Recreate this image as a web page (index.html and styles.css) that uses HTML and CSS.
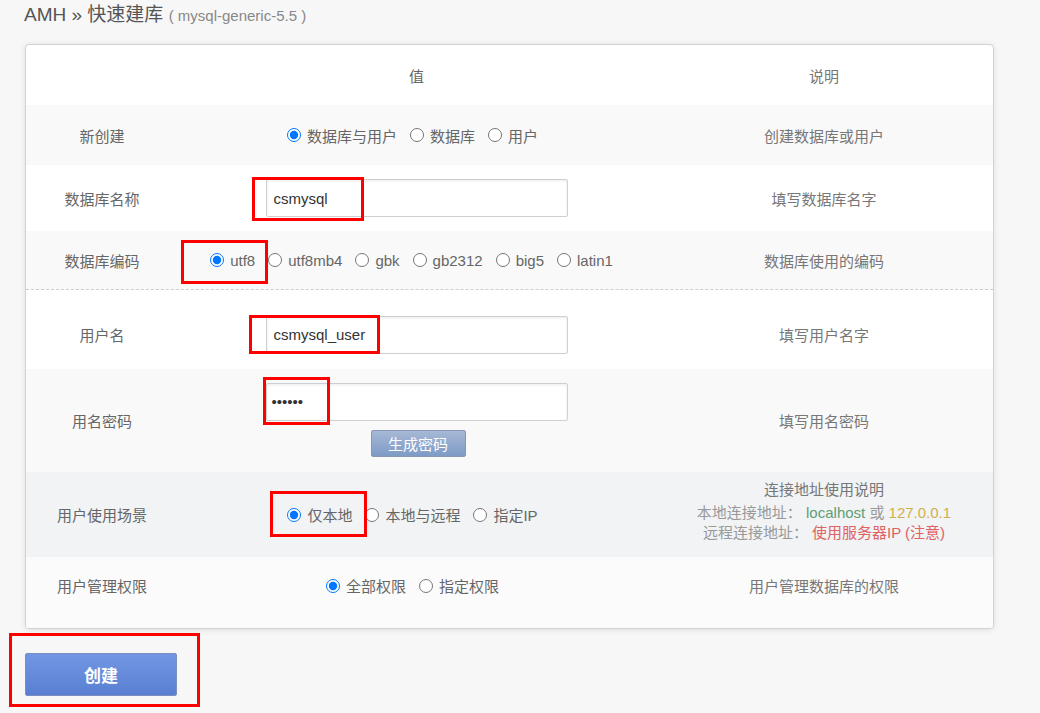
FILE: index.html
```html
<!DOCTYPE html>
<html lang="zh-CN">
<head>
<meta charset="utf-8">
<title>AMH 快速建库</title>
<link rel="stylesheet" href="styles.css">
</head>
<body>
<div class="page">
  <h1 class="title">AMH » 快速建库 <small>( mysql-generic-5.5 )</small></h1>

  <div class="card">
    <div class="row head">
      <div class="cell"></div>
      <div class="cell">值</div>
      <div class="cell desc">说明</div>
    </div>

    <div class="row r1 alt">
      <div class="cell">新创建</div>
      <div class="cell">
        <div class="radios">
          <label class="opt"><input type="radio" name="t" checked>数据库与用户</label>
          <label class="opt"><input type="radio" name="t">数据库</label>
          <label class="opt"><input type="radio" name="t">用户</label>
        </div>
      </div>
      <div class="cell desc">创建数据库或用户</div>
    </div>

    <div class="row r2">
      <div class="cell">数据库名称</div>
      <div class="cell"><input class="text" type="text" value="csmysql"></div>
      <div class="cell desc">填写数据库名字</div>
    </div>

    <div class="row r3 alt">
      <div class="cell">数据库编码</div>
      <div class="cell">
        <div class="radios enc">
          <label class="opt"><input type="radio" name="e" checked>utf8</label>
          <label class="opt"><input type="radio" name="e">utf8mb4</label>
          <label class="opt"><input type="radio" name="e">gbk</label>
          <label class="opt"><input type="radio" name="e">gb2312</label>
          <label class="opt"><input type="radio" name="e">big5</label>
          <label class="opt"><input type="radio" name="e">latin1</label>
        </div>
      </div>
      <div class="cell desc">数据库使用的编码</div>
    </div>

    <div class="row r4">
      <div class="cell">用户名</div>
      <div class="cell"><input class="text" type="text" value="csmysql_user"></div>
      <div class="cell desc">填写用户名字</div>
    </div>

    <div class="row r5 alt">
      <div class="cell">用名密码</div>
      <div class="cell stack">
        <input class="text pw" type="password" value="123456">
        <button class="gen" type="button">生成密码</button>
      </div>
      <div class="cell desc">填写用名密码</div>
    </div>

    <div class="row r6">
      <div class="cell">用户使用场景</div>
      <div class="cell">
        <div class="radios">
          <label class="opt"><input type="radio" name="s" checked>仅本地</label>
          <label class="opt"><input type="radio" name="s">本地与远程</label>
          <label class="opt"><input type="radio" name="s">指定IP</label>
        </div>
      </div>
      <div class="cell desc info-box">
        <div class="info-title">连接地址使用说明</div>
        <div class="info">本地连接地址： <span class="green">localhost</span> 或 <span class="gold">127.0.0.1</span></div>
        <div class="info">远程连接地址： <span class="red">使用服务器IP (注意)</span></div>
      </div>
    </div>

    <div class="row r7">
      <div class="cell">用户管理权限</div>
      <div class="cell">
        <div class="radios">
          <label class="opt"><input type="radio" name="p" checked>全部权限</label>
          <label class="opt"><input type="radio" name="p">指定权限</label>
        </div>
      </div>
      <div class="cell desc">用户管理数据库的权限</div>
    </div>
  </div>

  <button class="submit" type="button">创建</button>

  <div class="mark m1"></div>
  <div class="mark m2"></div>
  <div class="mark m3"></div>
  <div class="mark m4"></div>
  <div class="mark m5"></div>
  <div class="mark m6"></div>
</div>
</body>
</html>
```

FILE: styles.css
```css
html, body {
  margin: 0;
  padding: 0;
}

body {
  background: #f7f7f7;
  font-family: "Liberation Sans", "Noto Sans CJK SC", sans-serif;
  color: #666;
}

.page {
  position: relative;
  padding: 2px 0 0 25px;
  min-height: 710px;
  box-sizing: border-box;
}

.title {
  margin: 0 0 0 -1px;
  font-size: 19px;
  line-height: 25px;
  font-weight: normal;
  color: #555;
}

.title small {
  font-size: 15px;
  color: #888;
}

.card {
  margin-top: 16px;
  width: 969px;
  box-sizing: border-box;
  background: #fff;
  border: 1px solid #d2d2d2;
  border-radius: 4px;
  box-shadow: 0 1px 6px rgba(0, 0, 0, 0.10);
  overflow: hidden;
}

.row {
  display: grid;
  grid-template-columns: 152px 477px 1fr;
  align-items: center;
  font-size: 15px;
  color: #666;
}

.row.alt {
  background: #f9f9f9;
}

.cell {
  text-align: center;
}

.desc {
  color: #777;
}

.head { height: 60px; }
.r1 { height: 60px; }
.r2 { height: 66px; }
.r3 { height: 58px; border-bottom: 1px dashed #cfcfcf; }
.r4 { height: 79px; box-sizing: border-box; padding-top: 10px; }
.r5 { height: 103px; }
.r6 { height: 85px; background: #f1f3f5; }
.r7 { height: 71px; background: #fbfbfb; box-sizing: border-box; padding-bottom: 14px; }

.radios {
  display: flex;
  justify-content: center;
  align-items: center;
  gap: 13px;
  padding-right: 8px;
}

.radios.enc {
  padding-right: 10px;
}

.opt {
  display: inline-flex;
  align-items: center;
  white-space: nowrap;
}

.opt input {
  width: 14px;
  height: 14px;
  margin: 0 6px 0 0;
}

.text {
  display: block;
  margin: 0 auto;
  width: 302px;
  height: 38px;
  box-sizing: border-box;
  border: 1px solid #cfcfcf;
  border-radius: 2px;
  box-shadow: inset 0 1px 3px rgba(0, 0, 0, 0.08);
  padding: 0 7px;
  font-family: "Liberation Sans", "Noto Sans CJK SC", sans-serif;
  font-size: 15px;
  color: #333;
  background: #fff;
}

.pw {
  padding-left: 5px;
}

.stack {
  display: flex;
  flex-direction: column;
  align-items: center;
  gap: 9px;
  padding-bottom: 2px;
}

.gen {
  width: 95px;
  height: 27px;
  border: 1px solid #8797b2;
  border-radius: 2px;
  background: linear-gradient(#a6b8d5, #7e9bc6);
  color: #fff;
  font-family: "Liberation Sans", "Noto Sans CJK SC", sans-serif;
  font-size: 15px;
  padding: 0;
  margin-left: 3px;
}

.info-box {
  padding-bottom: 8px;
}

.info-title {
  font-size: 15px;
  color: #777;
  margin-bottom: 4px;
}

.info {
  font-size: 15px;
  line-height: 20px;
  color: #999;
}

.green { color: #5f9e76; }
.gold { color: #d1b04a; }
.red { color: #e06262; }

.submit {
  display: block;
  margin-top: 24px;
  width: 152px;
  height: 43px;
  border: 1px solid #7a8fbf;
  border-radius: 2px;
  background: linear-gradient(#7197e3, #5a7fd2);
  color: #fff;
  font-family: "Liberation Sans", "Noto Sans CJK SC", sans-serif;
  font-size: 17px;
  font-weight: bold;
  padding: 0;
}

.mark {
  position: absolute;
  border: 3px solid #f00;
  box-sizing: border-box;
  pointer-events: none;
}

.m1 { left: 252px; top: 177px; width: 112px; height: 44px; }
.m2 { left: 181px; top: 240px; width: 87px; height: 44px; }
.m3 { left: 249px; top: 315px; width: 131px; height: 39px; }
.m4 { left: 263px; top: 377px; width: 67px; height: 48px; }
.m5 { left: 270px; top: 491px; width: 97px; height: 46px; }
.m6 { left: 9px; top: 633px; width: 191px; height: 74px; }
```
